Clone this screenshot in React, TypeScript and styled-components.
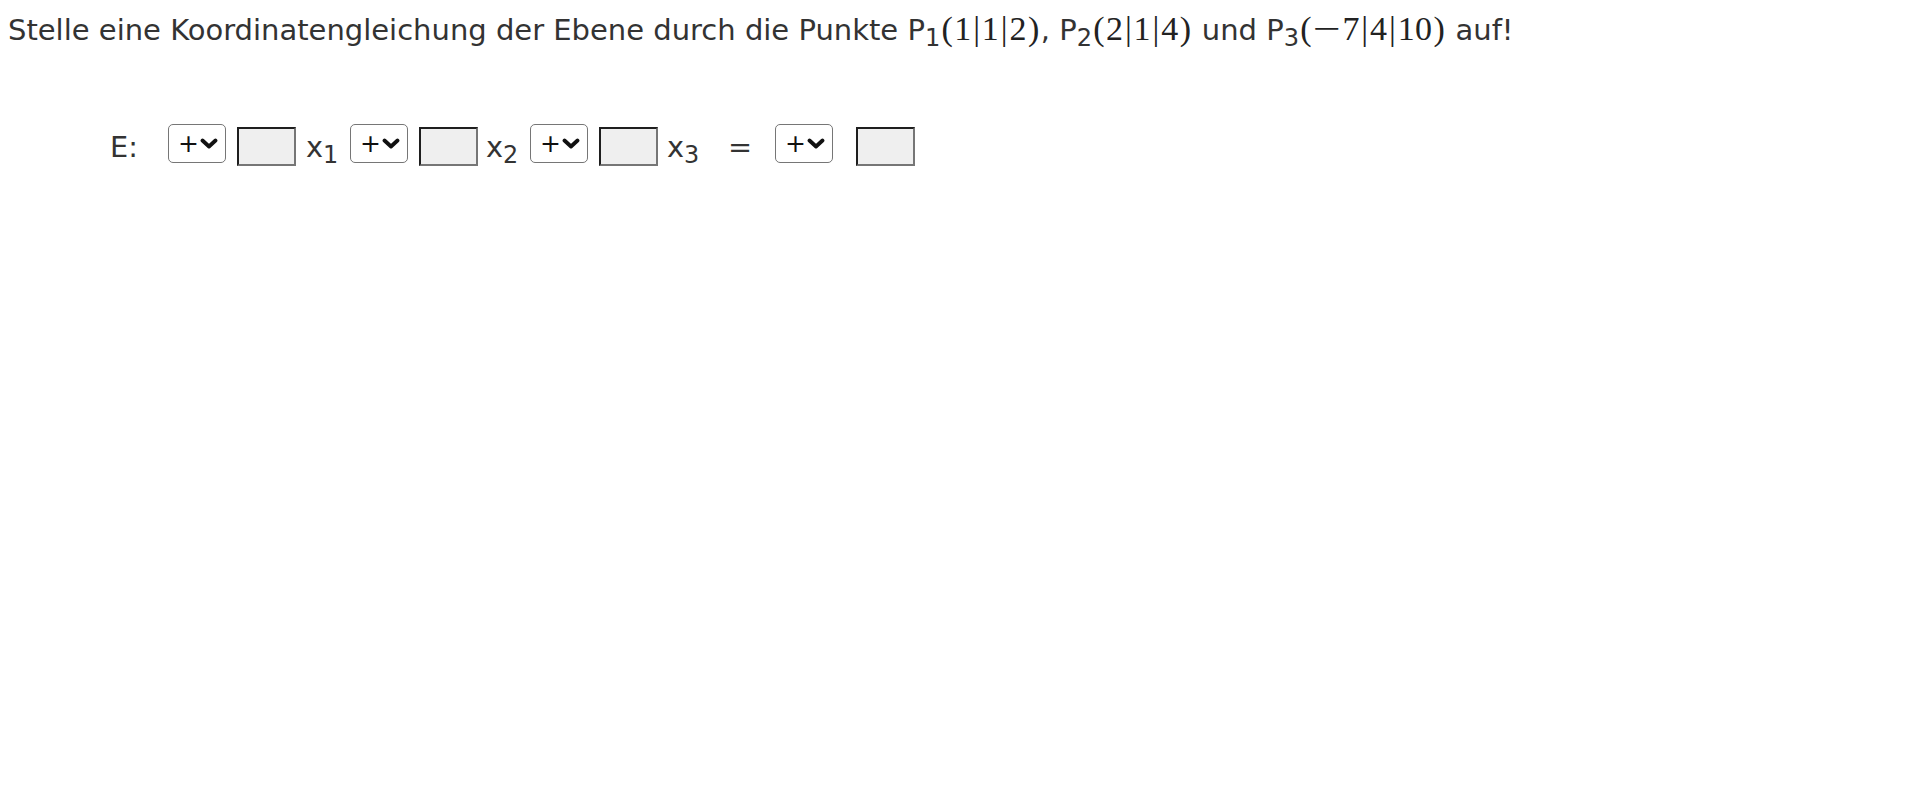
import React from "react";
import styled, { createGlobalStyle } from "styled-components";

const GlobalStyle = createGlobalStyle`
  html, body { background: #ffffff; }
  body {
    margin: 8px;
    font-family: "DejaVu Sans", Verdana, sans-serif;
    color: #333333;
  }
`;

const Question = styled.p`
  margin: 0;
  padding-top: 4px;
  font-size: 29px;
  line-height: 1.2;
  white-space: nowrap;
`;

const Sub = styled.sub`
  font-size: 0.83em;
  vertical-align: -0.26em;
  line-height: 0;
`;

const Math = styled.span`
  font-family: "Liberation Serif", "Times New Roman", serif;
  font-size: 34px;
  line-height: 1;
  letter-spacing: 0.3px;
  color: #222;
`;

const Paren = styled.span`
  display: inline-block;
  margin: 0 1.2px;
`;

const Bar = styled.span`
  display: inline-block;
  margin: 0 1.6px;
`;

const Minus = styled.span`
  display: inline-block;
  transform: scaleX(1.45);
  margin: 0 6px 0 4px;
`;

const EquationRow = styled.div`
  display: flex;
  align-items: flex-start;
  margin: 76px 0 0 102px;
  font-size: 28.8px;
  line-height: 1.164;
`;

const Label = styled.span`
  margin-top: 7px;
  width: 58px;
`;

const SelectWrap = styled.span<{ $ml: number }>`
  position: relative;
  display: inline-flex;
  margin-left: ${(p) => p.$ml}px;
`;

const SignSelect = styled.select`
  appearance: none;
  -webkit-appearance: none;
  box-sizing: border-box;
  width: 58px;
  height: 39px;
  margin: 0;
  padding: 0 0 0 9px;
  border: 1px solid #767676;
  border-radius: 5px;
  background: #ffffff;
  color: #111;
  font-family: "DejaVu Sans", Verdana, sans-serif;
  font-size: 25px;
  line-height: 37px;
  outline: none;
`;

const Chevron = styled.svg`
  position: absolute;
  right: 8px;
  top: 14px;
  width: 18px;
  height: 11px;
  pointer-events: none;
`;

const CoefInput = styled.input<{ $ml: number }>`
  box-sizing: border-box;
  width: 59px;
  height: 39px;
  margin: 3px 0 0 ${(p) => p.$ml}px;
  padding: 0;
  border-style: solid;
  border-width: 2px;
  border-color: #1e1e1e #767676 #767676 #1e1e1e;
  background: #efefef;
  font-size: 20px;
  outline: none;
`;

const Var = styled.span<{ $ml: number; $w: number }>`
  margin: 7px 0 0 ${(p) => p.$ml}px;
  width: ${(p) => p.$w}px;
  white-space: nowrap;
`;

const Equals = styled.span`
  margin: 7px 0 0 21px;
  width: 47px;
`;

function SelectBox({ ml }: { ml: number }) {
  return (
    <SelectWrap $ml={ml}>
      <SignSelect defaultValue="+">
        <option value="+">+</option>
        <option value="-">−</option>
      </SignSelect>
      <Chevron viewBox="0 0 18 11">
        <path
          d="M2.5 2.5 L9 8.5 L15.5 2.5"
          fill="none"
          stroke="#111"
          strokeWidth="3.8"
          strokeLinecap="round"
          strokeLinejoin="round"
        />
      </Chevron>
    </SelectWrap>
  );
}

function Point({ name, coords }: { name: string; coords: string[] }) {
  return (
    <>
      P<Sub>{name}</Sub>
      <Math>
        <Paren>(</Paren>
        {coords.map((c, i) => (
          <React.Fragment key={i}>
            {i > 0 && <Bar>|</Bar>}
            {c.startsWith("−") ? (
              <>
                <Minus>−</Minus>
                {c.slice(1)}
              </>
            ) : (
              c
            )}
          </React.Fragment>
        ))}
        <Paren>)</Paren>
      </Math>
    </>
  );
}

export default function App() {
  return (
    <>
      <GlobalStyle />
      <Question>
        Stelle eine Koordinatengleichung der Ebene durch die Punkte{" "}
        <Point name="1" coords={["1", "1", "2"]} />,{" "}
        <Point name="2" coords={["2", "1", "4"]} /> und{" "}
        <Point name="3" coords={["−7", "4", "10"]} /> auf!
      </Question>
      <EquationRow>
        <Label>E:</Label>
        <SelectBox ml={0} />
        <CoefInput $ml={11} />
        <Var $ml={10} $w={40}>
          x<Sub>1</Sub>
        </Var>
        <SelectBox ml={4} />
        <CoefInput $ml={11} />
        <Var $ml={8} $w={41}>
          x<Sub>2</Sub>
        </Var>
        <SelectBox ml={3} />
        <CoefInput $ml={11} />
        <Var $ml={9} $w={40}>
          x<Sub>3</Sub>
        </Var>
        <Equals>=</Equals>
        <SelectBox ml={0} />
        <CoefInput $ml={23} />
      </EquationRow>
    </>
  );
}
